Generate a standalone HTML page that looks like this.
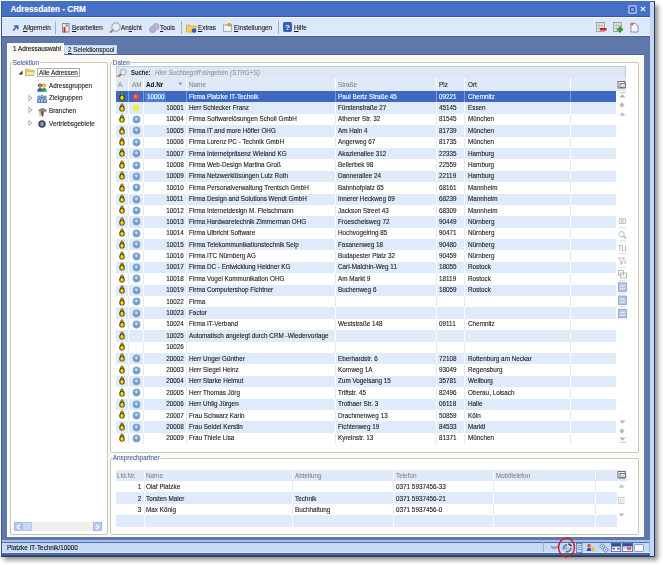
<!DOCTYPE html>
<html><head><meta charset="utf-8">
<style>
*{margin:0;padding:0;box-sizing:border-box}
html,body{width:663px;height:565px;overflow:hidden;background:#fff;font-family:"Liberation Sans",sans-serif;font-size:7.5px;color:#1a1a1a;-webkit-text-stroke:0.12px currentColor}
span{display:inline-block;white-space:nowrap;transform:scaleX(.845);transform-origin:0 0}
span.rt{transform-origin:100% 0}
.a{position:absolute}
.ic{position:absolute}
#shadow{position:absolute;left:4px;top:5px;width:654px;height:555px;background:#000;opacity:.45;filter:blur(2.6px)}
#win{position:absolute;left:1px;top:1px;width:653.8px;height:555.5px;background:#c4d6f4;border:1px solid #3b5898;border-right-color:#2c3a5c;border-bottom-color:#2c3a5c}
#rstrip{display:none}
#title{position:absolute;left:1.5px;top:1.3px;width:648.5px;height:15.7px;background:#4471c5;border-bottom:1px solid #35589e}
#title .tx{position:absolute;left:8.9px;top:3.3px;font-weight:bold;font-size:8.2px;letter-spacing:0;color:#fff;line-height:9px}
#toolbar{position:absolute;left:1.5px;top:16.8px;width:648.5px;height:19.2px;background:#dce9fa;border-top:1px solid #eef5ff;border-bottom:1px solid #eef5ff}
#tabarea{position:absolute;left:1.5px;top:36px;width:648.3px;height:504px;background:#5f77a9;border-top:1px solid #475f92}
.tb{position:absolute;top:5.9px;line-height:8px;color:#1a1a1a}
.sep{position:absolute;top:3px;width:1px;height:13.5px;background:#9fb0c8}
#page{position:absolute;left:5.4px;top:17.5px;width:637.6px;height:482.5px;background:#fbfaf5;border:1px solid #ffffff;box-shadow:0 -1px 0 #50679a}
.tab{position:absolute;line-height:8px}
.gb{position:absolute;border:1px solid #c9c5b8;border-radius:2px;background:#fff}
.gl{position:absolute;background:#fbfaf5;color:#4c66ad;padding:0 1px;line-height:8px}
.r{position:absolute;left:116px;width:500.4px;height:11.39px;background:#fff;line-height:11.39px;white-space:nowrap}
.r.alt{background:#dfeafb}
.r.sel{background:#3d69c2;color:#fff}
.r i{position:absolute;top:0;width:1px;height:100%;background:#dfeafb}
.r.alt i{background:#fff}
.r.sel i{background:#7b9be0}
.r .t{position:absolute;top:-0.4px}
.r .hl{position:absolute;left:28.6px;top:0.8px;width:21px;height:9.8px;background:#4b80da}
.r.c{width:501px}
.r.c .t{top:0.4px}
.hd{position:absolute;height:13.6px;background:#dfe9f8;line-height:8px;color:#8b8b8b}

.hd i{position:absolute;top:1px;width:1px;height:12px;background:#fff}
.hd span{position:absolute;top:3.6px}
.hd2 span{top:1.9px}
#status{position:absolute;left:1.5px;top:540px;width:648.3px;height:15.5px;background:linear-gradient(to bottom,#a9c1ec 0,#a9c1ec 1.6px,#5070b0 1.6px,#5070b0 3px,#c6d9f7 3px,#c6d9f7 12.2px,#dce8fb 12.2px,#dce8fb 13px,#4b69a9 13px,#4b69a9 14.8px,#3a4a70 14.8px)}
</style></head><body>
<div id="shadow"></div>
<div id="win"></div>
  <div id="rstrip"></div>
  <div id="title"><div class="tx">Adressdaten - CRM</div>
    <svg class="ic" style="left:626.4px;top:3.7px" width="9" height="9" viewBox="0 0 9 9"><rect x="0.4" y="0.4" width="8.2" height="8.2" rx="1.2" fill="#88a6e6" stroke="#b8ccf4" stroke-width="0.7"/><rect x="2.4" y="2.4" width="4.2" height="4.2" rx="0.6" fill="none" stroke="#2c4c98" stroke-width="1"/></svg>
    <svg class="ic" style="left:638.8px;top:4.8px" width="6" height="6" viewBox="0 0 6 6"><path d="M0.8 0.8 L5.2 5.2 M5.2 0.8 L0.8 5.2" stroke="#fff" stroke-width="1.15"/></svg>
  </div>
  <div id="toolbar">
    <svg class="ic" style="left:10.2px;top:7.0px" width="7" height="6" viewBox="0 0 7 6"><path d="M1 5.5 L5.5 1 M2 1 L5.8 1 L5.8 4.6" stroke="#3a66b8" stroke-width="1.5" fill="none"/></svg>
    <span class="tb" style="left:21.2px"><u>A</u>llgemein</span>
    <div class="sep" style="left:53.3px"></div>
    <svg class="ic" style="left:59.5px;top:4.9px" width="9" height="10" viewBox="0 0 9 10"><rect x="1.5" y="0.5" width="6.5" height="8.5" fill="#f4f4f4" stroke="#777" stroke-width="0.8"/><rect x="2.5" y="4" width="2" height="5.5" fill="#d03020"/><rect x="4.5" y="1.5" width="2.5" height="2" fill="#6a8fd0"/></svg>
    <span class="tb" style="left:70.2px"><u>B</u>earbeiten</span>
    <svg class="ic" style="left:107px;top:3.9px" width="13" height="11" viewBox="0 0 13 11"><circle cx="7" cy="5" r="4.2" fill="#e4eef8" stroke="#8896a8" stroke-width="1"/><path d="M4 8 L1 10.5" stroke="#b07a40" stroke-width="2"/></svg>
    <span class="tb" style="left:119.7px">An<u>s</u>icht</span>
    <svg class="ic" style="left:147px;top:5.4px" width="11" height="10" viewBox="0 0 11 10"><circle cx="7" cy="3.5" r="3" fill="#c0b8e0" stroke="#9a90c0" stroke-width="0.8"/><circle cx="3.6" cy="6.5" r="3" fill="#b8b0d8" stroke="#9a90c0" stroke-width="0.8"/></svg>
    <span class="tb" style="left:158.7px"><u>T</u>ools</span>
    <div class="sep" style="left:179.5px"></div>
    <svg class="ic" style="left:184.5px;top:4.9px" width="11" height="10" viewBox="0 0 11 10"><path d="M0.5 2 L4 2 L5 3 L10 3 L10 9 L0.5 9 Z" fill="#f5d060" stroke="#c8a030" stroke-width="0.7"/><circle cx="8" cy="7.5" r="2.3" fill="#2060c0"/></svg>
    <span class="tb" style="left:196.2px"><u>E</u>xtras</span>
    <svg class="ic" style="left:221px;top:4.4px" width="10" height="10" viewBox="0 0 10 10"><rect x="0.5" y="3" width="8" height="6.5" fill="#f0f4fa" stroke="#8090a8" stroke-width="0.7"/><path d="M3 3 L6 0.8 L9.5 2.5 L7 5 Z" fill="#e0a030"/></svg>
    <span class="tb" style="left:232.2px"><u>E</u>instellungen</span>
    <div class="sep" style="left:276px"></div>
    <svg class="ic" style="left:281.5px;top:4.4px" width="9" height="10" viewBox="0 0 9 10"><rect x="0.5" y="0.5" width="8" height="9" rx="1" fill="#2f62c0" stroke="#1c3f8a" stroke-width="0.7"/><text x="4.5" y="8" font-size="7.5" font-weight="bold" fill="#fff" text-anchor="middle" font-family="Liberation Sans">?</text></svg>
    <span class="tb" style="left:292.2px"><u>H</u>ilfe</span>
    <svg class="ic" style="left:594.5px;top:4.4px" width="11" height="11" viewBox="0 0 11 11"><rect x="0.5" y="0.5" width="8" height="9" fill="#e8e8e8" stroke="#888" stroke-width="0.7"/><path d="M0.5 3.5 H8.5 M0.5 6.5 H8.5 M3.2 0.5 V9.5 M5.8 0.5 V9.5" stroke="#999" stroke-width="0.5"/><rect x="4" y="6" width="6.5" height="2.5" fill="#d02020"/></svg>
    <svg class="ic" style="left:611px;top:4.4px" width="11" height="11" viewBox="0 0 11 11"><rect x="0.5" y="0.5" width="8" height="9" fill="#e8e8e8" stroke="#888" stroke-width="0.7"/><path d="M0.5 3.5 H8.5 M0.5 6.5 H8.5 M3.2 0.5 V9.5 M5.8 0.5 V9.5" stroke="#999" stroke-width="0.5"/><path d="M7 4.5 V10.5 M4 7.5 H10" stroke="#20a020" stroke-width="2"/></svg>
    <svg class="ic" style="left:628.5px;top:3.9px" width="9" height="11" viewBox="0 0 9 11"><path d="M1 1.5 H5.5 L8 4 V10 H1 Z" fill="#f4f6fa" stroke="#607090" stroke-width="0.7"/><circle cx="2" cy="2" r="1.5" fill="#f07020"/></svg>
  </div>
  <div id="tabarea">
    <!-- tabs -->
    <div class="a" style="left:62.2px;top:8px;width:53.5px;height:10.5px;background:#d8e6f8;border:1px solid #c3d4ee;border-bottom:none"></div>
    <span class="tab" style="left:66px;top:8.6px;color:#222"><u>2</u> Selektionspool</span>
    <div id="page"></div>
    <div class="a" style="left:5.4px;top:5.5px;width:57.1px;height:13.5px;background:#fbfaf5;border:1px solid #fff;border-bottom:none"></div>
    <span class="tab" style="left:11px;top:7.8px;color:#111">1 Adressauswahl</span>
  </div>

  <!-- Selektion groupbox -->
  <div class="gb" style="left:9.8px;top:62px;width:98.4px;height:472.8px"></div>
  <span class="gl" style="left:12px;top:59px">Selektion</span>
  <!-- tree -->
  <svg class="ic" style="left:17.5px;top:70px" width="5" height="5" viewBox="0 0 5 5"><path d="M4.5 0.5 L4.5 4.5 L0.5 4.5 Z" fill="#333"/></svg>
  <svg class="ic" style="left:24.5px;top:68px" width="10" height="8" viewBox="0 0 10 8"><path d="M0.5 1 L3.5 1 L4.5 2 L8.5 2 L8.5 7.5 L0.5 7.5 Z" fill="#f2d58a" stroke="#b89a50" stroke-width="0.6"/><path d="M1.5 3.5 L9.8 3.5 L8.5 7.5 L0.5 7.5 Z" fill="#fbe6a8" stroke="#c0a058" stroke-width="0.6"/></svg>
  <div class="a" style="left:36.6px;top:68.2px;width:43.4px;height:9.2px;border:1px solid #aaaaaa;background:#fff"></div>
  <span class="a" style="left:38.6px;top:69.3px;line-height:8px;">Alle Adressen</span>
  <svg class="ic" style="left:36.5px;top:82.5px" width="10" height="9" viewBox="0 0 10 9"><circle cx="3" cy="2.6" r="2.1" fill="#6a3a20"/><circle cx="3" cy="2.9" r="1.3" fill="#d8905a"/><path d="M0.2 8.8 Q0.3 5 3 5 Q5.7 5 5.8 8.8 Z" fill="#2f5cc0"/><circle cx="7" cy="2.6" r="2.1" fill="#e09030"/><circle cx="7" cy="2.9" r="1.3" fill="#f4c080"/><path d="M4.2 8.8 Q4.3 5 7 5 Q9.7 5 9.8 8.8 Z" fill="#30a040"/></svg>
  <span class="a" style="left:49px;top:81.5px;line-height:8px">Adressgruppen</span>
  <svg class="ic" style="left:27.5px;top:94.5px" width="5" height="6" viewBox="0 0 5 6"><path d="M0.8 0.5 L4.2 3 L0.8 5.5 Z" fill="none" stroke="#8a8a8a" stroke-width="0.7"/></svg>
  <svg class="ic" style="left:36.5px;top:95px" width="10" height="8" viewBox="0 0 10 8"><g fill="#a8c0e8" stroke="#2a4890" stroke-width="0.6"><circle cx="2" cy="2.2" r="1.3"/><path d="M0.4 7.7 V5 Q0.4 3.7 2 3.7 Q3.6 3.7 3.6 5 V7.7 Z"/><circle cx="8" cy="2.2" r="1.3"/><path d="M6.4 7.7 V5 Q6.4 3.7 8 3.7 Q9.6 3.7 9.6 5 V7.7 Z"/><circle cx="5" cy="1.5" r="1.3"/><path d="M3.4 7.7 V4.3 Q3.4 3 5 3 Q6.6 3 6.6 4.3 V7.7 Z"/></g></svg>
  <span class="a" style="left:49px;top:94.2px;line-height:8px">Zielgruppen</span>
  <svg class="ic" style="left:27.5px;top:107px" width="5" height="6" viewBox="0 0 5 6"><path d="M0.8 0.5 L4.2 3 L0.8 5.5 Z" fill="none" stroke="#8a8a8a" stroke-width="0.7"/></svg>
  <svg class="ic" style="left:37.5px;top:107.5px" width="9" height="9" viewBox="0 0 9 9"><path d="M0.5 2.5 Q2 0.3 5 0.5 Q8 0.8 8.5 3.2 L6.2 3.6 L3 3.2 Z" fill="#8a8a8a" stroke="#505050" stroke-width="0.4"/><path d="M3 3.3 L5.8 3.6 L5.2 8.6 H3.8 Z" fill="#7a3820"/><path d="M1.3 3 L2.8 3.3 L2.6 8 H1.6 Z" fill="#9a9a9a"/></svg>
  <span class="a" style="left:49px;top:107px;line-height:8px">Branchen</span>
  <svg class="ic" style="left:27.5px;top:119.5px" width="5" height="6" viewBox="0 0 5 6"><path d="M0.8 0.5 L4.2 3 L0.8 5.5 Z" fill="none" stroke="#8a8a8a" stroke-width="0.7"/></svg>
  <svg class="ic" style="left:37.8px;top:120px" width="8" height="8" viewBox="0 0 8 8"><circle cx="4" cy="4" r="3.7" fill="#2c4a80"/><ellipse cx="4" cy="3.9" rx="1.6" ry="2.2" fill="#c89870"/></svg>
  <span class="a" style="left:49px;top:119.5px;line-height:8px">Vertriebsgebiete</span>
  <!-- scrollbar -->
  <div class="a" style="left:13.8px;top:522.3px;width:88px;height:8.5px;background:#f1f0ea"></div>
  <div class="a" style="left:13.8px;top:522.3px;width:8.5px;height:8.5px;background:#b9cdf0;border:1px solid #9fb6e0;border-radius:1px"></div>
  <svg class="ic" style="left:15.8px;top:523.8px" width="5" height="6" viewBox="0 0 5 6"><path d="M3.8 0.6 L1.2 3 L3.8 5.4" fill="none" stroke="#fff" stroke-width="1.1"/></svg>
  <div class="a" style="left:22.3px;top:522.3px;width:9.5px;height:8.5px;background:#c8d8f4;border:1px solid #b0c4ea;border-radius:1px"></div>
  <div class="a" style="left:93.3px;top:522.3px;width:8.5px;height:8.5px;background:#b9cdf0;border:1px solid #9fb6e0;border-radius:1px"></div>
  <svg class="ic" style="left:95.3px;top:523.8px" width="5" height="6" viewBox="0 0 5 6"><path d="M1.2 0.6 L3.8 3 L1.2 5.4" fill="none" stroke="#fff" stroke-width="1.1"/></svg>

  <!-- Daten groupbox -->
  <div class="gb" style="left:109.8px;top:62px;width:529.6px;height:391px"></div>
  <span class="gl" style="left:112.2px;top:58.5px">Daten</span>
  <div class="a" style="left:116px;top:66.4px;width:510px;height:11.3px;background:#dfe6f4;border:1px solid #bccbe3"></div>
  <svg class="ic" style="left:116.5px;top:67.5px" width="10" height="10" viewBox="0 0 10 10"><circle cx="6" cy="4" r="3" fill="#e6f4fc" stroke="#8a9aa8" stroke-width="0.8"/><circle cx="5.5" cy="3.4" r="1.2" fill="#b8dcf4"/><path d="M3.6 6.4 L1.2 8.8" stroke="#b87848" stroke-width="2.1" stroke-linecap="round"/></svg>
  <span class="a" style="left:130.5px;top:67.8px;line-height:9px;color:#222;font-weight:bold;-webkit-text-stroke:0;transform:scaleX(.78)">Suche:</span>
  <span class="a" style="left:155px;top:67.8px;line-height:9px;color:#8f8f8f;font-style:italic;-webkit-text-stroke:0.05px currentColor">Hier Suchbegriff eingeben (STRG+S)</span>
  <!-- header -->
  <div class="hd" style="left:116px;top:77.4px;width:510px">
    <i style="left:12.0px"></i><i style="left:27.0px"></i><i style="left:70.0px"></i><i style="left:219.0px"></i><i style="left:319.7px"></i><i style="left:348.4px"></i><i style="left:454.2px"></i>
    <span style="left:2.0px">A</span><span style="left:16.4px">AM</span><span style="left:30.0px;color:#111;font-weight:bold;-webkit-text-stroke:0">Ad.Nr</span><span style="left:73.0px">Name</span><span style="left:222.0px">Straße</span><span style="left:322.7px;color:#222">Plz</span><span style="left:351.7px;color:#222">Ort</span>
  </div>
  <svg class="ic" style="left:178px;top:82px" width="5" height="4" viewBox="0 0 5 4"><path d="M0.3 0.5 H4.7 L2.5 3.6 Z" fill="#9a9a9a"/></svg>
  <svg class="ic" style="left:616.5px;top:80px" width="10" height="10" viewBox="0 0 10 10"><rect x="1" y="1.5" width="7" height="6.5" fill="#f4f4f4" stroke="#555" stroke-width="0.8"/><rect x="3" y="3.5" width="5.5" height="4" fill="#ddd" stroke="#555" stroke-width="0.7"/></svg>
  <div class="r sel" style="top:91.00px">
<i style="left:12.0px"></i>
<i style="left:27.0px"></i>
<i style="left:70.0px"></i>
<i style="left:219.0px"></i>
<i style="left:319.7px"></i>
<i style="left:348.4px"></i>
<i style="left:454.2px"></i>
<b class="hl"></b>
<span class="t" style="left:30.6px">10000</span>
<span class="t" style="left:73px">Firma Platzke IT-Technik</span>
<span class="t" style="left:222px">Paul Bertz Straße 45</span>
<span class="t" style="left:322.7px">09221</span>
<span class="t" style="left:351.7px">Chemnitz</span>
</div>
<svg class="ic" style="left:118.6px;top:91.50px" width="6" height="9" viewBox="0 0 6 9"><path d="M3 0.4 C4.3 0.4 4.6 1.6 4.5 2.8 C5.6 3.6 5.9 5.4 5.6 6.8 C5.4 8 4.6 8.6 3 8.6 C1.4 8.6 0.6 8 0.4 6.8 C0.1 5.4 0.4 3.6 1.5 2.8 C1.4 1.6 1.7 0.4 3 0.4 Z" fill="#403600"/><path d="M3 3.4 C4.2 3.6 4.8 4.8 4.7 6.2 C4.6 7.4 4 7.8 3 7.8 C2 7.8 1.4 7.4 1.3 6.2 C1.2 4.8 1.8 3.6 3 3.4 Z" fill="#f0d418"/><circle cx="3" cy="1.9" r="0.8" fill="#c8c840"/></svg>
<svg class="ic" style="left:131.8px;top:92.6px" width="8" height="8" viewBox="0 0 8 8"><circle cx="4" cy="4" r="3.2" fill="#e0463a"/><circle cx="3.4" cy="3.2" r="1.2" fill="#f58a70"/></svg>
<div class="r alt" style="top:102.39px">
<i style="left:12.0px"></i>
<i style="left:27.0px"></i>
<i style="left:70.0px"></i>
<i style="left:219.0px"></i>
<i style="left:319.7px"></i>
<i style="left:348.4px"></i>
<i style="left:454.2px"></i>
<span class="t rt" style="right:432.7px">10001</span>
<span class="t" style="left:73px">Herr Schlecker Franz</span>
<span class="t" style="left:222px">Fürstenstraße 27</span>
<span class="t" style="left:322.7px">45145</span>
<span class="t" style="left:351.7px">Essen</span>
</div>
<svg class="ic" style="left:118.6px;top:102.89px" width="6" height="9" viewBox="0 0 6 9"><path d="M3 0.4 C4.3 0.4 4.6 1.6 4.5 2.8 C5.6 3.6 5.9 5.4 5.6 6.8 C5.4 8 4.6 8.6 3 8.6 C1.4 8.6 0.6 8 0.4 6.8 C0.1 5.4 0.4 3.6 1.5 2.8 C1.4 1.6 1.7 0.4 3 0.4 Z" fill="#403600"/><path d="M3 3.4 C4.2 3.6 4.8 4.8 4.7 6.2 C4.6 7.4 4 7.8 3 7.8 C2 7.8 1.4 7.4 1.3 6.2 C1.2 4.8 1.8 3.6 3 3.4 Z" fill="#f0d418"/><circle cx="3" cy="1.9" r="0.8" fill="#c8c840"/></svg>
<svg class="ic" style="left:131.8px;top:103.99px" width="8" height="8" viewBox="0 0 8 8"><circle cx="4" cy="4" r="3.1" fill="#f6e640"/><circle cx="3.6" cy="3.6" r="1.8" fill="#fff048"/></svg>
<div class="r" style="top:113.78px">
<i style="left:12.0px"></i>
<i style="left:27.0px"></i>
<i style="left:70.0px"></i>
<i style="left:219.0px"></i>
<i style="left:319.7px"></i>
<i style="left:348.4px"></i>
<i style="left:454.2px"></i>
<span class="t rt" style="right:432.7px">10004</span>
<span class="t" style="left:73px">Firma Softwarelösungen Scholl GmbH</span>
<span class="t" style="left:222px">Athener Str. 32</span>
<span class="t" style="left:322.7px">81545</span>
<span class="t" style="left:351.7px">München</span>
</div>
<svg class="ic" style="left:118.6px;top:114.28px" width="6" height="9" viewBox="0 0 6 9"><path d="M3 0.4 C4.3 0.4 4.6 1.6 4.5 2.8 C5.6 3.6 5.9 5.4 5.6 6.8 C5.4 8 4.6 8.6 3 8.6 C1.4 8.6 0.6 8 0.4 6.8 C0.1 5.4 0.4 3.6 1.5 2.8 C1.4 1.6 1.7 0.4 3 0.4 Z" fill="#403600"/><path d="M3 3.4 C4.2 3.6 4.8 4.8 4.7 6.2 C4.6 7.4 4 7.8 3 7.8 C2 7.8 1.4 7.4 1.3 6.2 C1.2 4.8 1.8 3.6 3 3.4 Z" fill="#f0d418"/><circle cx="3" cy="1.9" r="0.8" fill="#c8c840"/></svg>
<svg class="ic" style="left:131.6px;top:114.98px" width="9" height="9" viewBox="0 0 9 9"><circle cx="4.5" cy="4.5" r="3.9" fill="#a2b0c2"/><circle cx="4.5" cy="4.5" r="3.2" fill="#6a9ad4"/><circle cx="4" cy="3.8" r="1.6" fill="#a0c4ea"/><path d="M3.4 3.2 Q4.6 2.4 5.4 3.3 Q5.2 4.4 4.4 5.4" stroke="#f0f8ff" stroke-width="0.8" fill="none"/></svg>
<div class="r alt" style="top:125.17px">
<i style="left:12.0px"></i>
<i style="left:27.0px"></i>
<i style="left:70.0px"></i>
<i style="left:219.0px"></i>
<i style="left:319.7px"></i>
<i style="left:348.4px"></i>
<i style="left:454.2px"></i>
<span class="t rt" style="right:432.7px">10005</span>
<span class="t" style="left:73px">Firma IT and more Höfler OHG</span>
<span class="t" style="left:222px">Am Hain 4</span>
<span class="t" style="left:322.7px">81739</span>
<span class="t" style="left:351.7px">München</span>
</div>
<svg class="ic" style="left:118.6px;top:125.67px" width="6" height="9" viewBox="0 0 6 9"><path d="M3 0.4 C4.3 0.4 4.6 1.6 4.5 2.8 C5.6 3.6 5.9 5.4 5.6 6.8 C5.4 8 4.6 8.6 3 8.6 C1.4 8.6 0.6 8 0.4 6.8 C0.1 5.4 0.4 3.6 1.5 2.8 C1.4 1.6 1.7 0.4 3 0.4 Z" fill="#403600"/><path d="M3 3.4 C4.2 3.6 4.8 4.8 4.7 6.2 C4.6 7.4 4 7.8 3 7.8 C2 7.8 1.4 7.4 1.3 6.2 C1.2 4.8 1.8 3.6 3 3.4 Z" fill="#f0d418"/><circle cx="3" cy="1.9" r="0.8" fill="#c8c840"/></svg>
<svg class="ic" style="left:131.6px;top:126.37px" width="9" height="9" viewBox="0 0 9 9"><circle cx="4.5" cy="4.5" r="3.9" fill="#a2b0c2"/><circle cx="4.5" cy="4.5" r="3.2" fill="#6a9ad4"/><circle cx="4" cy="3.8" r="1.6" fill="#a0c4ea"/><path d="M3.4 3.2 Q4.6 2.4 5.4 3.3 Q5.2 4.4 4.4 5.4" stroke="#f0f8ff" stroke-width="0.8" fill="none"/></svg>
<div class="r" style="top:136.56px">
<i style="left:12.0px"></i>
<i style="left:27.0px"></i>
<i style="left:70.0px"></i>
<i style="left:219.0px"></i>
<i style="left:319.7px"></i>
<i style="left:348.4px"></i>
<i style="left:454.2px"></i>
<span class="t rt" style="right:432.7px">10006</span>
<span class="t" style="left:73px">Firma Lorenz PC - Technik GmbH</span>
<span class="t" style="left:222px">Angerweg 67</span>
<span class="t" style="left:322.7px">81735</span>
<span class="t" style="left:351.7px">München</span>
</div>
<svg class="ic" style="left:118.6px;top:137.06px" width="6" height="9" viewBox="0 0 6 9"><path d="M3 0.4 C4.3 0.4 4.6 1.6 4.5 2.8 C5.6 3.6 5.9 5.4 5.6 6.8 C5.4 8 4.6 8.6 3 8.6 C1.4 8.6 0.6 8 0.4 6.8 C0.1 5.4 0.4 3.6 1.5 2.8 C1.4 1.6 1.7 0.4 3 0.4 Z" fill="#403600"/><path d="M3 3.4 C4.2 3.6 4.8 4.8 4.7 6.2 C4.6 7.4 4 7.8 3 7.8 C2 7.8 1.4 7.4 1.3 6.2 C1.2 4.8 1.8 3.6 3 3.4 Z" fill="#f0d418"/><circle cx="3" cy="1.9" r="0.8" fill="#c8c840"/></svg>
<svg class="ic" style="left:131.6px;top:137.76px" width="9" height="9" viewBox="0 0 9 9"><circle cx="4.5" cy="4.5" r="3.9" fill="#a2b0c2"/><circle cx="4.5" cy="4.5" r="3.2" fill="#6a9ad4"/><circle cx="4" cy="3.8" r="1.6" fill="#a0c4ea"/><path d="M3.4 3.2 Q4.6 2.4 5.4 3.3 Q5.2 4.4 4.4 5.4" stroke="#f0f8ff" stroke-width="0.8" fill="none"/></svg>
<div class="r alt" style="top:147.95px">
<i style="left:12.0px"></i>
<i style="left:27.0px"></i>
<i style="left:70.0px"></i>
<i style="left:219.0px"></i>
<i style="left:319.7px"></i>
<i style="left:348.4px"></i>
<i style="left:454.2px"></i>
<span class="t rt" style="right:432.7px">10007</span>
<span class="t" style="left:73px">Firma Internetpräsenz Wieland KG</span>
<span class="t" style="left:222px">Akazienallee 312</span>
<span class="t" style="left:322.7px">22335</span>
<span class="t" style="left:351.7px">Hamburg</span>
</div>
<svg class="ic" style="left:118.6px;top:148.45px" width="6" height="9" viewBox="0 0 6 9"><path d="M3 0.4 C4.3 0.4 4.6 1.6 4.5 2.8 C5.6 3.6 5.9 5.4 5.6 6.8 C5.4 8 4.6 8.6 3 8.6 C1.4 8.6 0.6 8 0.4 6.8 C0.1 5.4 0.4 3.6 1.5 2.8 C1.4 1.6 1.7 0.4 3 0.4 Z" fill="#403600"/><path d="M3 3.4 C4.2 3.6 4.8 4.8 4.7 6.2 C4.6 7.4 4 7.8 3 7.8 C2 7.8 1.4 7.4 1.3 6.2 C1.2 4.8 1.8 3.6 3 3.4 Z" fill="#f0d418"/><circle cx="3" cy="1.9" r="0.8" fill="#c8c840"/></svg>
<svg class="ic" style="left:131.6px;top:149.15px" width="9" height="9" viewBox="0 0 9 9"><circle cx="4.5" cy="4.5" r="3.9" fill="#a2b0c2"/><circle cx="4.5" cy="4.5" r="3.2" fill="#6a9ad4"/><circle cx="4" cy="3.8" r="1.6" fill="#a0c4ea"/><path d="M3.4 3.2 Q4.6 2.4 5.4 3.3 Q5.2 4.4 4.4 5.4" stroke="#f0f8ff" stroke-width="0.8" fill="none"/></svg>
<div class="r" style="top:159.34px">
<i style="left:12.0px"></i>
<i style="left:27.0px"></i>
<i style="left:70.0px"></i>
<i style="left:219.0px"></i>
<i style="left:319.7px"></i>
<i style="left:348.4px"></i>
<i style="left:454.2px"></i>
<span class="t rt" style="right:432.7px">10008</span>
<span class="t" style="left:73px">Firma Web-Design Martina Groß</span>
<span class="t" style="left:222px">Bellerbek 98</span>
<span class="t" style="left:322.7px">22559</span>
<span class="t" style="left:351.7px">Hamburg</span>
</div>
<svg class="ic" style="left:118.6px;top:159.84px" width="6" height="9" viewBox="0 0 6 9"><path d="M3 0.4 C4.3 0.4 4.6 1.6 4.5 2.8 C5.6 3.6 5.9 5.4 5.6 6.8 C5.4 8 4.6 8.6 3 8.6 C1.4 8.6 0.6 8 0.4 6.8 C0.1 5.4 0.4 3.6 1.5 2.8 C1.4 1.6 1.7 0.4 3 0.4 Z" fill="#403600"/><path d="M3 3.4 C4.2 3.6 4.8 4.8 4.7 6.2 C4.6 7.4 4 7.8 3 7.8 C2 7.8 1.4 7.4 1.3 6.2 C1.2 4.8 1.8 3.6 3 3.4 Z" fill="#f0d418"/><circle cx="3" cy="1.9" r="0.8" fill="#c8c840"/></svg>
<svg class="ic" style="left:131.6px;top:160.54px" width="9" height="9" viewBox="0 0 9 9"><circle cx="4.5" cy="4.5" r="3.9" fill="#a2b0c2"/><circle cx="4.5" cy="4.5" r="3.2" fill="#6a9ad4"/><circle cx="4" cy="3.8" r="1.6" fill="#a0c4ea"/><path d="M3.4 3.2 Q4.6 2.4 5.4 3.3 Q5.2 4.4 4.4 5.4" stroke="#f0f8ff" stroke-width="0.8" fill="none"/></svg>
<div class="r alt" style="top:170.73px">
<i style="left:12.0px"></i>
<i style="left:27.0px"></i>
<i style="left:70.0px"></i>
<i style="left:219.0px"></i>
<i style="left:319.7px"></i>
<i style="left:348.4px"></i>
<i style="left:454.2px"></i>
<span class="t rt" style="right:432.7px">10009</span>
<span class="t" style="left:73px">Firma Netzwerklösungen Lutz Roth</span>
<span class="t" style="left:222px">Dannerallee 24</span>
<span class="t" style="left:322.7px">22119</span>
<span class="t" style="left:351.7px">Hamburg</span>
</div>
<svg class="ic" style="left:118.6px;top:171.23px" width="6" height="9" viewBox="0 0 6 9"><path d="M3 0.4 C4.3 0.4 4.6 1.6 4.5 2.8 C5.6 3.6 5.9 5.4 5.6 6.8 C5.4 8 4.6 8.6 3 8.6 C1.4 8.6 0.6 8 0.4 6.8 C0.1 5.4 0.4 3.6 1.5 2.8 C1.4 1.6 1.7 0.4 3 0.4 Z" fill="#403600"/><path d="M3 3.4 C4.2 3.6 4.8 4.8 4.7 6.2 C4.6 7.4 4 7.8 3 7.8 C2 7.8 1.4 7.4 1.3 6.2 C1.2 4.8 1.8 3.6 3 3.4 Z" fill="#f0d418"/><circle cx="3" cy="1.9" r="0.8" fill="#c8c840"/></svg>
<svg class="ic" style="left:131.6px;top:171.93px" width="9" height="9" viewBox="0 0 9 9"><circle cx="4.5" cy="4.5" r="3.9" fill="#a2b0c2"/><circle cx="4.5" cy="4.5" r="3.2" fill="#6a9ad4"/><circle cx="4" cy="3.8" r="1.6" fill="#a0c4ea"/><path d="M3.4 3.2 Q4.6 2.4 5.4 3.3 Q5.2 4.4 4.4 5.4" stroke="#f0f8ff" stroke-width="0.8" fill="none"/></svg>
<div class="r" style="top:182.12px">
<i style="left:12.0px"></i>
<i style="left:27.0px"></i>
<i style="left:70.0px"></i>
<i style="left:219.0px"></i>
<i style="left:319.7px"></i>
<i style="left:348.4px"></i>
<i style="left:454.2px"></i>
<span class="t rt" style="right:432.7px">10010</span>
<span class="t" style="left:73px">Firma Personalverwaltung Trentsch GmbH</span>
<span class="t" style="left:222px">Bahnhofplatz 65</span>
<span class="t" style="left:322.7px">68161</span>
<span class="t" style="left:351.7px">Mannheim</span>
</div>
<svg class="ic" style="left:118.6px;top:182.62px" width="6" height="9" viewBox="0 0 6 9"><path d="M3 0.4 C4.3 0.4 4.6 1.6 4.5 2.8 C5.6 3.6 5.9 5.4 5.6 6.8 C5.4 8 4.6 8.6 3 8.6 C1.4 8.6 0.6 8 0.4 6.8 C0.1 5.4 0.4 3.6 1.5 2.8 C1.4 1.6 1.7 0.4 3 0.4 Z" fill="#403600"/><path d="M3 3.4 C4.2 3.6 4.8 4.8 4.7 6.2 C4.6 7.4 4 7.8 3 7.8 C2 7.8 1.4 7.4 1.3 6.2 C1.2 4.8 1.8 3.6 3 3.4 Z" fill="#f0d418"/><circle cx="3" cy="1.9" r="0.8" fill="#c8c840"/></svg>
<svg class="ic" style="left:131.6px;top:183.32px" width="9" height="9" viewBox="0 0 9 9"><circle cx="4.5" cy="4.5" r="3.9" fill="#a2b0c2"/><circle cx="4.5" cy="4.5" r="3.2" fill="#6a9ad4"/><circle cx="4" cy="3.8" r="1.6" fill="#a0c4ea"/><path d="M3.4 3.2 Q4.6 2.4 5.4 3.3 Q5.2 4.4 4.4 5.4" stroke="#f0f8ff" stroke-width="0.8" fill="none"/></svg>
<div class="r alt" style="top:193.51px">
<i style="left:12.0px"></i>
<i style="left:27.0px"></i>
<i style="left:70.0px"></i>
<i style="left:219.0px"></i>
<i style="left:319.7px"></i>
<i style="left:348.4px"></i>
<i style="left:454.2px"></i>
<span class="t rt" style="right:432.7px">10011</span>
<span class="t" style="left:73px">Firma Design and Solutions Wendt GmbH</span>
<span class="t" style="left:222px">Innerer Heckweg 69</span>
<span class="t" style="left:322.7px">68239</span>
<span class="t" style="left:351.7px">Mannheim</span>
</div>
<svg class="ic" style="left:118.6px;top:194.01px" width="6" height="9" viewBox="0 0 6 9"><path d="M3 0.4 C4.3 0.4 4.6 1.6 4.5 2.8 C5.6 3.6 5.9 5.4 5.6 6.8 C5.4 8 4.6 8.6 3 8.6 C1.4 8.6 0.6 8 0.4 6.8 C0.1 5.4 0.4 3.6 1.5 2.8 C1.4 1.6 1.7 0.4 3 0.4 Z" fill="#403600"/><path d="M3 3.4 C4.2 3.6 4.8 4.8 4.7 6.2 C4.6 7.4 4 7.8 3 7.8 C2 7.8 1.4 7.4 1.3 6.2 C1.2 4.8 1.8 3.6 3 3.4 Z" fill="#f0d418"/><circle cx="3" cy="1.9" r="0.8" fill="#c8c840"/></svg>
<svg class="ic" style="left:131.6px;top:194.71px" width="9" height="9" viewBox="0 0 9 9"><circle cx="4.5" cy="4.5" r="3.9" fill="#a2b0c2"/><circle cx="4.5" cy="4.5" r="3.2" fill="#6a9ad4"/><circle cx="4" cy="3.8" r="1.6" fill="#a0c4ea"/><path d="M3.4 3.2 Q4.6 2.4 5.4 3.3 Q5.2 4.4 4.4 5.4" stroke="#f0f8ff" stroke-width="0.8" fill="none"/></svg>
<div class="r" style="top:204.90px">
<i style="left:12.0px"></i>
<i style="left:27.0px"></i>
<i style="left:70.0px"></i>
<i style="left:219.0px"></i>
<i style="left:319.7px"></i>
<i style="left:348.4px"></i>
<i style="left:454.2px"></i>
<span class="t rt" style="right:432.7px">10012</span>
<span class="t" style="left:73px">Firma Internetdesign M. Fleischmann</span>
<span class="t" style="left:222px">Jackson Street 43</span>
<span class="t" style="left:322.7px">68309</span>
<span class="t" style="left:351.7px">Mannheim</span>
</div>
<svg class="ic" style="left:118.6px;top:205.40px" width="6" height="9" viewBox="0 0 6 9"><path d="M3 0.4 C4.3 0.4 4.6 1.6 4.5 2.8 C5.6 3.6 5.9 5.4 5.6 6.8 C5.4 8 4.6 8.6 3 8.6 C1.4 8.6 0.6 8 0.4 6.8 C0.1 5.4 0.4 3.6 1.5 2.8 C1.4 1.6 1.7 0.4 3 0.4 Z" fill="#403600"/><path d="M3 3.4 C4.2 3.6 4.8 4.8 4.7 6.2 C4.6 7.4 4 7.8 3 7.8 C2 7.8 1.4 7.4 1.3 6.2 C1.2 4.8 1.8 3.6 3 3.4 Z" fill="#f0d418"/><circle cx="3" cy="1.9" r="0.8" fill="#c8c840"/></svg>
<svg class="ic" style="left:131.6px;top:206.10px" width="9" height="9" viewBox="0 0 9 9"><circle cx="4.5" cy="4.5" r="3.9" fill="#a2b0c2"/><circle cx="4.5" cy="4.5" r="3.2" fill="#6a9ad4"/><circle cx="4" cy="3.8" r="1.6" fill="#a0c4ea"/><path d="M3.4 3.2 Q4.6 2.4 5.4 3.3 Q5.2 4.4 4.4 5.4" stroke="#f0f8ff" stroke-width="0.8" fill="none"/></svg>
<div class="r alt" style="top:216.29px">
<i style="left:12.0px"></i>
<i style="left:27.0px"></i>
<i style="left:70.0px"></i>
<i style="left:219.0px"></i>
<i style="left:319.7px"></i>
<i style="left:348.4px"></i>
<i style="left:454.2px"></i>
<span class="t rt" style="right:432.7px">10013</span>
<span class="t" style="left:73px">Firma Hardwaretechnik Zimmerman OHG</span>
<span class="t" style="left:222px">Froescheisweg 72</span>
<span class="t" style="left:322.7px">90449</span>
<span class="t" style="left:351.7px">Nürnberg</span>
</div>
<svg class="ic" style="left:118.6px;top:216.79px" width="6" height="9" viewBox="0 0 6 9"><path d="M3 0.4 C4.3 0.4 4.6 1.6 4.5 2.8 C5.6 3.6 5.9 5.4 5.6 6.8 C5.4 8 4.6 8.6 3 8.6 C1.4 8.6 0.6 8 0.4 6.8 C0.1 5.4 0.4 3.6 1.5 2.8 C1.4 1.6 1.7 0.4 3 0.4 Z" fill="#403600"/><path d="M3 3.4 C4.2 3.6 4.8 4.8 4.7 6.2 C4.6 7.4 4 7.8 3 7.8 C2 7.8 1.4 7.4 1.3 6.2 C1.2 4.8 1.8 3.6 3 3.4 Z" fill="#f0d418"/><circle cx="3" cy="1.9" r="0.8" fill="#c8c840"/></svg>
<svg class="ic" style="left:131.6px;top:217.49px" width="9" height="9" viewBox="0 0 9 9"><circle cx="4.5" cy="4.5" r="3.9" fill="#a2b0c2"/><circle cx="4.5" cy="4.5" r="3.2" fill="#6a9ad4"/><circle cx="4" cy="3.8" r="1.6" fill="#a0c4ea"/><path d="M3.4 3.2 Q4.6 2.4 5.4 3.3 Q5.2 4.4 4.4 5.4" stroke="#f0f8ff" stroke-width="0.8" fill="none"/></svg>
<div class="r" style="top:227.68px">
<i style="left:12.0px"></i>
<i style="left:27.0px"></i>
<i style="left:70.0px"></i>
<i style="left:219.0px"></i>
<i style="left:319.7px"></i>
<i style="left:348.4px"></i>
<i style="left:454.2px"></i>
<span class="t rt" style="right:432.7px">10014</span>
<span class="t" style="left:73px">Firma Ulbricht Software</span>
<span class="t" style="left:222px">Hochvogelring 85</span>
<span class="t" style="left:322.7px">90471</span>
<span class="t" style="left:351.7px">Nürnberg</span>
</div>
<svg class="ic" style="left:118.6px;top:228.18px" width="6" height="9" viewBox="0 0 6 9"><path d="M3 0.4 C4.3 0.4 4.6 1.6 4.5 2.8 C5.6 3.6 5.9 5.4 5.6 6.8 C5.4 8 4.6 8.6 3 8.6 C1.4 8.6 0.6 8 0.4 6.8 C0.1 5.4 0.4 3.6 1.5 2.8 C1.4 1.6 1.7 0.4 3 0.4 Z" fill="#403600"/><path d="M3 3.4 C4.2 3.6 4.8 4.8 4.7 6.2 C4.6 7.4 4 7.8 3 7.8 C2 7.8 1.4 7.4 1.3 6.2 C1.2 4.8 1.8 3.6 3 3.4 Z" fill="#f0d418"/><circle cx="3" cy="1.9" r="0.8" fill="#c8c840"/></svg>
<svg class="ic" style="left:131.6px;top:228.88px" width="9" height="9" viewBox="0 0 9 9"><circle cx="4.5" cy="4.5" r="3.9" fill="#a2b0c2"/><circle cx="4.5" cy="4.5" r="3.2" fill="#6a9ad4"/><circle cx="4" cy="3.8" r="1.6" fill="#a0c4ea"/><path d="M3.4 3.2 Q4.6 2.4 5.4 3.3 Q5.2 4.4 4.4 5.4" stroke="#f0f8ff" stroke-width="0.8" fill="none"/></svg>
<div class="r alt" style="top:239.07px">
<i style="left:12.0px"></i>
<i style="left:27.0px"></i>
<i style="left:70.0px"></i>
<i style="left:219.0px"></i>
<i style="left:319.7px"></i>
<i style="left:348.4px"></i>
<i style="left:454.2px"></i>
<span class="t rt" style="right:432.7px">10015</span>
<span class="t" style="left:73px">Firma Telekommunikationstechnik Seip</span>
<span class="t" style="left:222px">Fasanenweg 18</span>
<span class="t" style="left:322.7px">90480</span>
<span class="t" style="left:351.7px">Nürnberg</span>
</div>
<svg class="ic" style="left:118.6px;top:239.57px" width="6" height="9" viewBox="0 0 6 9"><path d="M3 0.4 C4.3 0.4 4.6 1.6 4.5 2.8 C5.6 3.6 5.9 5.4 5.6 6.8 C5.4 8 4.6 8.6 3 8.6 C1.4 8.6 0.6 8 0.4 6.8 C0.1 5.4 0.4 3.6 1.5 2.8 C1.4 1.6 1.7 0.4 3 0.4 Z" fill="#403600"/><path d="M3 3.4 C4.2 3.6 4.8 4.8 4.7 6.2 C4.6 7.4 4 7.8 3 7.8 C2 7.8 1.4 7.4 1.3 6.2 C1.2 4.8 1.8 3.6 3 3.4 Z" fill="#f0d418"/><circle cx="3" cy="1.9" r="0.8" fill="#c8c840"/></svg>
<svg class="ic" style="left:131.6px;top:240.27px" width="9" height="9" viewBox="0 0 9 9"><circle cx="4.5" cy="4.5" r="3.9" fill="#a2b0c2"/><circle cx="4.5" cy="4.5" r="3.2" fill="#6a9ad4"/><circle cx="4" cy="3.8" r="1.6" fill="#a0c4ea"/><path d="M3.4 3.2 Q4.6 2.4 5.4 3.3 Q5.2 4.4 4.4 5.4" stroke="#f0f8ff" stroke-width="0.8" fill="none"/></svg>
<div class="r" style="top:250.46px">
<i style="left:12.0px"></i>
<i style="left:27.0px"></i>
<i style="left:70.0px"></i>
<i style="left:219.0px"></i>
<i style="left:319.7px"></i>
<i style="left:348.4px"></i>
<i style="left:454.2px"></i>
<span class="t rt" style="right:432.7px">10016</span>
<span class="t" style="left:73px">Firma ITC Nürnberg AG</span>
<span class="t" style="left:222px">Budapester Platz 32</span>
<span class="t" style="left:322.7px">90459</span>
<span class="t" style="left:351.7px">Nürnberg</span>
</div>
<svg class="ic" style="left:118.6px;top:250.96px" width="6" height="9" viewBox="0 0 6 9"><path d="M3 0.4 C4.3 0.4 4.6 1.6 4.5 2.8 C5.6 3.6 5.9 5.4 5.6 6.8 C5.4 8 4.6 8.6 3 8.6 C1.4 8.6 0.6 8 0.4 6.8 C0.1 5.4 0.4 3.6 1.5 2.8 C1.4 1.6 1.7 0.4 3 0.4 Z" fill="#403600"/><path d="M3 3.4 C4.2 3.6 4.8 4.8 4.7 6.2 C4.6 7.4 4 7.8 3 7.8 C2 7.8 1.4 7.4 1.3 6.2 C1.2 4.8 1.8 3.6 3 3.4 Z" fill="#f0d418"/><circle cx="3" cy="1.9" r="0.8" fill="#c8c840"/></svg>
<svg class="ic" style="left:131.6px;top:251.66px" width="9" height="9" viewBox="0 0 9 9"><circle cx="4.5" cy="4.5" r="3.9" fill="#a2b0c2"/><circle cx="4.5" cy="4.5" r="3.2" fill="#6a9ad4"/><circle cx="4" cy="3.8" r="1.6" fill="#a0c4ea"/><path d="M3.4 3.2 Q4.6 2.4 5.4 3.3 Q5.2 4.4 4.4 5.4" stroke="#f0f8ff" stroke-width="0.8" fill="none"/></svg>
<div class="r alt" style="top:261.85px">
<i style="left:12.0px"></i>
<i style="left:27.0px"></i>
<i style="left:70.0px"></i>
<i style="left:219.0px"></i>
<i style="left:319.7px"></i>
<i style="left:348.4px"></i>
<i style="left:454.2px"></i>
<span class="t rt" style="right:432.7px">10017</span>
<span class="t" style="left:73px">Firma DC - Entwicklung Heidner KG</span>
<span class="t" style="left:222px">Carl-Malchin-Weg 11</span>
<span class="t" style="left:322.7px">18055</span>
<span class="t" style="left:351.7px">Rostock</span>
</div>
<svg class="ic" style="left:118.6px;top:262.35px" width="6" height="9" viewBox="0 0 6 9"><path d="M3 0.4 C4.3 0.4 4.6 1.6 4.5 2.8 C5.6 3.6 5.9 5.4 5.6 6.8 C5.4 8 4.6 8.6 3 8.6 C1.4 8.6 0.6 8 0.4 6.8 C0.1 5.4 0.4 3.6 1.5 2.8 C1.4 1.6 1.7 0.4 3 0.4 Z" fill="#403600"/><path d="M3 3.4 C4.2 3.6 4.8 4.8 4.7 6.2 C4.6 7.4 4 7.8 3 7.8 C2 7.8 1.4 7.4 1.3 6.2 C1.2 4.8 1.8 3.6 3 3.4 Z" fill="#f0d418"/><circle cx="3" cy="1.9" r="0.8" fill="#c8c840"/></svg>
<svg class="ic" style="left:131.6px;top:263.05px" width="9" height="9" viewBox="0 0 9 9"><circle cx="4.5" cy="4.5" r="3.9" fill="#a2b0c2"/><circle cx="4.5" cy="4.5" r="3.2" fill="#6a9ad4"/><circle cx="4" cy="3.8" r="1.6" fill="#a0c4ea"/><path d="M3.4 3.2 Q4.6 2.4 5.4 3.3 Q5.2 4.4 4.4 5.4" stroke="#f0f8ff" stroke-width="0.8" fill="none"/></svg>
<div class="r" style="top:273.24px">
<i style="left:12.0px"></i>
<i style="left:27.0px"></i>
<i style="left:70.0px"></i>
<i style="left:219.0px"></i>
<i style="left:319.7px"></i>
<i style="left:348.4px"></i>
<i style="left:454.2px"></i>
<span class="t rt" style="right:432.7px">10018</span>
<span class="t" style="left:73px">Firma Vogel Kommunikation OHG</span>
<span class="t" style="left:222px">Am Markt 9</span>
<span class="t" style="left:322.7px">18119</span>
<span class="t" style="left:351.7px">Rostock</span>
</div>
<svg class="ic" style="left:118.6px;top:273.74px" width="6" height="9" viewBox="0 0 6 9"><path d="M3 0.4 C4.3 0.4 4.6 1.6 4.5 2.8 C5.6 3.6 5.9 5.4 5.6 6.8 C5.4 8 4.6 8.6 3 8.6 C1.4 8.6 0.6 8 0.4 6.8 C0.1 5.4 0.4 3.6 1.5 2.8 C1.4 1.6 1.7 0.4 3 0.4 Z" fill="#403600"/><path d="M3 3.4 C4.2 3.6 4.8 4.8 4.7 6.2 C4.6 7.4 4 7.8 3 7.8 C2 7.8 1.4 7.4 1.3 6.2 C1.2 4.8 1.8 3.6 3 3.4 Z" fill="#f0d418"/><circle cx="3" cy="1.9" r="0.8" fill="#c8c840"/></svg>
<svg class="ic" style="left:131.6px;top:274.44px" width="9" height="9" viewBox="0 0 9 9"><circle cx="4.5" cy="4.5" r="3.9" fill="#a2b0c2"/><circle cx="4.5" cy="4.5" r="3.2" fill="#6a9ad4"/><circle cx="4" cy="3.8" r="1.6" fill="#a0c4ea"/><path d="M3.4 3.2 Q4.6 2.4 5.4 3.3 Q5.2 4.4 4.4 5.4" stroke="#f0f8ff" stroke-width="0.8" fill="none"/></svg>
<div class="r alt" style="top:284.63px">
<i style="left:12.0px"></i>
<i style="left:27.0px"></i>
<i style="left:70.0px"></i>
<i style="left:219.0px"></i>
<i style="left:319.7px"></i>
<i style="left:348.4px"></i>
<i style="left:454.2px"></i>
<span class="t rt" style="right:432.7px">10019</span>
<span class="t" style="left:73px">Firma Computershop Fichtner</span>
<span class="t" style="left:222px">Buchenweg 6</span>
<span class="t" style="left:322.7px">18059</span>
<span class="t" style="left:351.7px">Rostock</span>
</div>
<svg class="ic" style="left:118.6px;top:285.13px" width="6" height="9" viewBox="0 0 6 9"><path d="M3 0.4 C4.3 0.4 4.6 1.6 4.5 2.8 C5.6 3.6 5.9 5.4 5.6 6.8 C5.4 8 4.6 8.6 3 8.6 C1.4 8.6 0.6 8 0.4 6.8 C0.1 5.4 0.4 3.6 1.5 2.8 C1.4 1.6 1.7 0.4 3 0.4 Z" fill="#403600"/><path d="M3 3.4 C4.2 3.6 4.8 4.8 4.7 6.2 C4.6 7.4 4 7.8 3 7.8 C2 7.8 1.4 7.4 1.3 6.2 C1.2 4.8 1.8 3.6 3 3.4 Z" fill="#f0d418"/><circle cx="3" cy="1.9" r="0.8" fill="#c8c840"/></svg>
<svg class="ic" style="left:131.6px;top:285.83px" width="9" height="9" viewBox="0 0 9 9"><circle cx="4.5" cy="4.5" r="3.9" fill="#a2b0c2"/><circle cx="4.5" cy="4.5" r="3.2" fill="#6a9ad4"/><circle cx="4" cy="3.8" r="1.6" fill="#a0c4ea"/><path d="M3.4 3.2 Q4.6 2.4 5.4 3.3 Q5.2 4.4 4.4 5.4" stroke="#f0f8ff" stroke-width="0.8" fill="none"/></svg>
<div class="r" style="top:296.02px">
<i style="left:12.0px"></i>
<i style="left:27.0px"></i>
<i style="left:70.0px"></i>
<i style="left:219.0px"></i>
<i style="left:319.7px"></i>
<i style="left:348.4px"></i>
<i style="left:454.2px"></i>
<span class="t rt" style="right:432.7px">10022</span>
<span class="t" style="left:73px">Firma</span>
<span class="t" style="left:222px"></span>
<span class="t" style="left:322.7px"></span>
<span class="t" style="left:351.7px"></span>
</div>
<svg class="ic" style="left:118.6px;top:296.52px" width="6" height="9" viewBox="0 0 6 9"><path d="M3 0.4 C4.3 0.4 4.6 1.6 4.5 2.8 C5.6 3.6 5.9 5.4 5.6 6.8 C5.4 8 4.6 8.6 3 8.6 C1.4 8.6 0.6 8 0.4 6.8 C0.1 5.4 0.4 3.6 1.5 2.8 C1.4 1.6 1.7 0.4 3 0.4 Z" fill="#403600"/><path d="M3 3.4 C4.2 3.6 4.8 4.8 4.7 6.2 C4.6 7.4 4 7.8 3 7.8 C2 7.8 1.4 7.4 1.3 6.2 C1.2 4.8 1.8 3.6 3 3.4 Z" fill="#f0d418"/><circle cx="3" cy="1.9" r="0.8" fill="#c8c840"/></svg>
<svg class="ic" style="left:131.6px;top:297.22px" width="9" height="9" viewBox="0 0 9 9"><circle cx="4.5" cy="4.5" r="3.9" fill="#a2b0c2"/><circle cx="4.5" cy="4.5" r="3.2" fill="#6a9ad4"/><circle cx="4" cy="3.8" r="1.6" fill="#a0c4ea"/><path d="M3.4 3.2 Q4.6 2.4 5.4 3.3 Q5.2 4.4 4.4 5.4" stroke="#f0f8ff" stroke-width="0.8" fill="none"/></svg>
<div class="r alt" style="top:307.41px">
<i style="left:12.0px"></i>
<i style="left:27.0px"></i>
<i style="left:70.0px"></i>
<i style="left:219.0px"></i>
<i style="left:319.7px"></i>
<i style="left:348.4px"></i>
<i style="left:454.2px"></i>
<span class="t rt" style="right:432.7px">10023</span>
<span class="t" style="left:73px">Factor</span>
<span class="t" style="left:222px"></span>
<span class="t" style="left:322.7px"></span>
<span class="t" style="left:351.7px"></span>
</div>
<svg class="ic" style="left:118.6px;top:307.91px" width="6" height="9" viewBox="0 0 6 9"><path d="M3 0.4 C4.3 0.4 4.6 1.6 4.5 2.8 C5.6 3.6 5.9 5.4 5.6 6.8 C5.4 8 4.6 8.6 3 8.6 C1.4 8.6 0.6 8 0.4 6.8 C0.1 5.4 0.4 3.6 1.5 2.8 C1.4 1.6 1.7 0.4 3 0.4 Z" fill="#403600"/><path d="M3 3.4 C4.2 3.6 4.8 4.8 4.7 6.2 C4.6 7.4 4 7.8 3 7.8 C2 7.8 1.4 7.4 1.3 6.2 C1.2 4.8 1.8 3.6 3 3.4 Z" fill="#f0d418"/><circle cx="3" cy="1.9" r="0.8" fill="#c8c840"/></svg>
<svg class="ic" style="left:131.6px;top:308.61px" width="9" height="9" viewBox="0 0 9 9"><circle cx="4.5" cy="4.5" r="3.9" fill="#a2b0c2"/><circle cx="4.5" cy="4.5" r="3.2" fill="#6a9ad4"/><circle cx="4" cy="3.8" r="1.6" fill="#a0c4ea"/><path d="M3.4 3.2 Q4.6 2.4 5.4 3.3 Q5.2 4.4 4.4 5.4" stroke="#f0f8ff" stroke-width="0.8" fill="none"/></svg>
<div class="r" style="top:318.80px">
<i style="left:12.0px"></i>
<i style="left:27.0px"></i>
<i style="left:70.0px"></i>
<i style="left:219.0px"></i>
<i style="left:319.7px"></i>
<i style="left:348.4px"></i>
<i style="left:454.2px"></i>
<span class="t rt" style="right:432.7px">10024</span>
<span class="t" style="left:73px">Firma IT-Verband</span>
<span class="t" style="left:222px">Weststraße 148</span>
<span class="t" style="left:322.7px">09111</span>
<span class="t" style="left:351.7px">Chemnitz</span>
</div>
<svg class="ic" style="left:118.6px;top:319.30px" width="6" height="9" viewBox="0 0 6 9"><path d="M3 0.4 C4.3 0.4 4.6 1.6 4.5 2.8 C5.6 3.6 5.9 5.4 5.6 6.8 C5.4 8 4.6 8.6 3 8.6 C1.4 8.6 0.6 8 0.4 6.8 C0.1 5.4 0.4 3.6 1.5 2.8 C1.4 1.6 1.7 0.4 3 0.4 Z" fill="#403600"/><path d="M3 3.4 C4.2 3.6 4.8 4.8 4.7 6.2 C4.6 7.4 4 7.8 3 7.8 C2 7.8 1.4 7.4 1.3 6.2 C1.2 4.8 1.8 3.6 3 3.4 Z" fill="#f0d418"/><circle cx="3" cy="1.9" r="0.8" fill="#c8c840"/></svg>
<svg class="ic" style="left:131.6px;top:320.00px" width="9" height="9" viewBox="0 0 9 9"><circle cx="4.5" cy="4.5" r="3.9" fill="#a2b0c2"/><circle cx="4.5" cy="4.5" r="3.2" fill="#6a9ad4"/><circle cx="4" cy="3.8" r="1.6" fill="#a0c4ea"/><path d="M3.4 3.2 Q4.6 2.4 5.4 3.3 Q5.2 4.4 4.4 5.4" stroke="#f0f8ff" stroke-width="0.8" fill="none"/></svg>
<div class="r alt" style="top:330.19px">
<i style="left:12.0px"></i>
<i style="left:27.0px"></i>
<i style="left:70.0px"></i>
<i style="left:219.0px"></i>
<i style="left:319.7px"></i>
<i style="left:348.4px"></i>
<i style="left:454.2px"></i>
<span class="t rt" style="right:432.7px">10025</span>
<span class="t" style="left:73px">Automatisch angelegt durch CRM -Wiedervorlage</span>
<span class="t" style="left:222px"></span>
<span class="t" style="left:322.7px"></span>
<span class="t" style="left:351.7px"></span>
</div>
<svg class="ic" style="left:118.6px;top:330.69px" width="6" height="9" viewBox="0 0 6 9"><path d="M3 0.4 C4.3 0.4 4.6 1.6 4.5 2.8 C5.6 3.6 5.9 5.4 5.6 6.8 C5.4 8 4.6 8.6 3 8.6 C1.4 8.6 0.6 8 0.4 6.8 C0.1 5.4 0.4 3.6 1.5 2.8 C1.4 1.6 1.7 0.4 3 0.4 Z" fill="#403600"/><path d="M3 3.4 C4.2 3.6 4.8 4.8 4.7 6.2 C4.6 7.4 4 7.8 3 7.8 C2 7.8 1.4 7.4 1.3 6.2 C1.2 4.8 1.8 3.6 3 3.4 Z" fill="#f0d418"/><circle cx="3" cy="1.9" r="0.8" fill="#c8c840"/></svg>
<div class="r" style="top:341.58px">
<i style="left:12.0px"></i>
<i style="left:27.0px"></i>
<i style="left:70.0px"></i>
<i style="left:219.0px"></i>
<i style="left:319.7px"></i>
<i style="left:348.4px"></i>
<i style="left:454.2px"></i>
<span class="t rt" style="right:432.7px">10026</span>
<span class="t" style="left:73px"></span>
<span class="t" style="left:222px"></span>
<span class="t" style="left:322.7px"></span>
<span class="t" style="left:351.7px"></span>
</div>
<svg class="ic" style="left:118.6px;top:342.08px" width="6" height="9" viewBox="0 0 6 9"><path d="M3 0.4 C4.3 0.4 4.6 1.6 4.5 2.8 C5.6 3.6 5.9 5.4 5.6 6.8 C5.4 8 4.6 8.6 3 8.6 C1.4 8.6 0.6 8 0.4 6.8 C0.1 5.4 0.4 3.6 1.5 2.8 C1.4 1.6 1.7 0.4 3 0.4 Z" fill="#403600"/><path d="M3 3.4 C4.2 3.6 4.8 4.8 4.7 6.2 C4.6 7.4 4 7.8 3 7.8 C2 7.8 1.4 7.4 1.3 6.2 C1.2 4.8 1.8 3.6 3 3.4 Z" fill="#f0d418"/><circle cx="3" cy="1.9" r="0.8" fill="#c8c840"/></svg>
<div class="r alt" style="top:352.97px">
<i style="left:12.0px"></i>
<i style="left:27.0px"></i>
<i style="left:70.0px"></i>
<i style="left:219.0px"></i>
<i style="left:319.7px"></i>
<i style="left:348.4px"></i>
<i style="left:454.2px"></i>
<span class="t rt" style="right:432.7px">20002</span>
<span class="t" style="left:73px">Herr Unger Günther</span>
<span class="t" style="left:222px">Eberhardstr. 6</span>
<span class="t" style="left:322.7px">72108</span>
<span class="t" style="left:351.7px">Rottenburg am Neckar</span>
</div>
<svg class="ic" style="left:118.6px;top:353.47px" width="6" height="9" viewBox="0 0 6 9"><path d="M3 0.4 C4.3 0.4 4.6 1.6 4.5 2.8 C5.6 3.6 5.9 5.4 5.6 6.8 C5.4 8 4.6 8.6 3 8.6 C1.4 8.6 0.6 8 0.4 6.8 C0.1 5.4 0.4 3.6 1.5 2.8 C1.4 1.6 1.7 0.4 3 0.4 Z" fill="#403600"/><path d="M3 3.4 C4.2 3.6 4.8 4.8 4.7 6.2 C4.6 7.4 4 7.8 3 7.8 C2 7.8 1.4 7.4 1.3 6.2 C1.2 4.8 1.8 3.6 3 3.4 Z" fill="#f0d418"/><circle cx="3" cy="1.9" r="0.8" fill="#c8c840"/></svg>
<svg class="ic" style="left:131.6px;top:354.17px" width="9" height="9" viewBox="0 0 9 9"><circle cx="4.5" cy="4.5" r="3.9" fill="#a2b0c2"/><circle cx="4.5" cy="4.5" r="3.2" fill="#6a9ad4"/><circle cx="4" cy="3.8" r="1.6" fill="#a0c4ea"/><path d="M3.4 3.2 Q4.6 2.4 5.4 3.3 Q5.2 4.4 4.4 5.4" stroke="#f0f8ff" stroke-width="0.8" fill="none"/></svg>
<div class="r" style="top:364.36px">
<i style="left:12.0px"></i>
<i style="left:27.0px"></i>
<i style="left:70.0px"></i>
<i style="left:219.0px"></i>
<i style="left:319.7px"></i>
<i style="left:348.4px"></i>
<i style="left:454.2px"></i>
<span class="t rt" style="right:432.7px">20003</span>
<span class="t" style="left:73px">Herr Siegel Heinz</span>
<span class="t" style="left:222px">Kornweg 1A</span>
<span class="t" style="left:322.7px">93049</span>
<span class="t" style="left:351.7px">Regensburg</span>
</div>
<svg class="ic" style="left:118.6px;top:364.86px" width="6" height="9" viewBox="0 0 6 9"><path d="M3 0.4 C4.3 0.4 4.6 1.6 4.5 2.8 C5.6 3.6 5.9 5.4 5.6 6.8 C5.4 8 4.6 8.6 3 8.6 C1.4 8.6 0.6 8 0.4 6.8 C0.1 5.4 0.4 3.6 1.5 2.8 C1.4 1.6 1.7 0.4 3 0.4 Z" fill="#403600"/><path d="M3 3.4 C4.2 3.6 4.8 4.8 4.7 6.2 C4.6 7.4 4 7.8 3 7.8 C2 7.8 1.4 7.4 1.3 6.2 C1.2 4.8 1.8 3.6 3 3.4 Z" fill="#f0d418"/><circle cx="3" cy="1.9" r="0.8" fill="#c8c840"/></svg>
<svg class="ic" style="left:131.6px;top:365.56px" width="9" height="9" viewBox="0 0 9 9"><circle cx="4.5" cy="4.5" r="3.9" fill="#a2b0c2"/><circle cx="4.5" cy="4.5" r="3.2" fill="#6a9ad4"/><circle cx="4" cy="3.8" r="1.6" fill="#a0c4ea"/><path d="M3.4 3.2 Q4.6 2.4 5.4 3.3 Q5.2 4.4 4.4 5.4" stroke="#f0f8ff" stroke-width="0.8" fill="none"/></svg>
<div class="r alt" style="top:375.75px">
<i style="left:12.0px"></i>
<i style="left:27.0px"></i>
<i style="left:70.0px"></i>
<i style="left:219.0px"></i>
<i style="left:319.7px"></i>
<i style="left:348.4px"></i>
<i style="left:454.2px"></i>
<span class="t rt" style="right:432.7px">20004</span>
<span class="t" style="left:73px">Herr Starke Helmut</span>
<span class="t" style="left:222px">Zum Vogelsang 15</span>
<span class="t" style="left:322.7px">35781</span>
<span class="t" style="left:351.7px">Weilburg</span>
</div>
<svg class="ic" style="left:118.6px;top:376.25px" width="6" height="9" viewBox="0 0 6 9"><path d="M3 0.4 C4.3 0.4 4.6 1.6 4.5 2.8 C5.6 3.6 5.9 5.4 5.6 6.8 C5.4 8 4.6 8.6 3 8.6 C1.4 8.6 0.6 8 0.4 6.8 C0.1 5.4 0.4 3.6 1.5 2.8 C1.4 1.6 1.7 0.4 3 0.4 Z" fill="#403600"/><path d="M3 3.4 C4.2 3.6 4.8 4.8 4.7 6.2 C4.6 7.4 4 7.8 3 7.8 C2 7.8 1.4 7.4 1.3 6.2 C1.2 4.8 1.8 3.6 3 3.4 Z" fill="#f0d418"/><circle cx="3" cy="1.9" r="0.8" fill="#c8c840"/></svg>
<svg class="ic" style="left:131.6px;top:376.95px" width="9" height="9" viewBox="0 0 9 9"><circle cx="4.5" cy="4.5" r="3.9" fill="#a2b0c2"/><circle cx="4.5" cy="4.5" r="3.2" fill="#6a9ad4"/><circle cx="4" cy="3.8" r="1.6" fill="#a0c4ea"/><path d="M3.4 3.2 Q4.6 2.4 5.4 3.3 Q5.2 4.4 4.4 5.4" stroke="#f0f8ff" stroke-width="0.8" fill="none"/></svg>
<div class="r" style="top:387.14px">
<i style="left:12.0px"></i>
<i style="left:27.0px"></i>
<i style="left:70.0px"></i>
<i style="left:219.0px"></i>
<i style="left:319.7px"></i>
<i style="left:348.4px"></i>
<i style="left:454.2px"></i>
<span class="t rt" style="right:432.7px">20005</span>
<span class="t" style="left:73px">Herr Thomas Jörg</span>
<span class="t" style="left:222px">Triftstr. 45</span>
<span class="t" style="left:322.7px">82496</span>
<span class="t" style="left:351.7px">Oberau, Loisach</span>
</div>
<svg class="ic" style="left:118.6px;top:387.64px" width="6" height="9" viewBox="0 0 6 9"><path d="M3 0.4 C4.3 0.4 4.6 1.6 4.5 2.8 C5.6 3.6 5.9 5.4 5.6 6.8 C5.4 8 4.6 8.6 3 8.6 C1.4 8.6 0.6 8 0.4 6.8 C0.1 5.4 0.4 3.6 1.5 2.8 C1.4 1.6 1.7 0.4 3 0.4 Z" fill="#403600"/><path d="M3 3.4 C4.2 3.6 4.8 4.8 4.7 6.2 C4.6 7.4 4 7.8 3 7.8 C2 7.8 1.4 7.4 1.3 6.2 C1.2 4.8 1.8 3.6 3 3.4 Z" fill="#f0d418"/><circle cx="3" cy="1.9" r="0.8" fill="#c8c840"/></svg>
<svg class="ic" style="left:131.6px;top:388.34px" width="9" height="9" viewBox="0 0 9 9"><circle cx="4.5" cy="4.5" r="3.9" fill="#a2b0c2"/><circle cx="4.5" cy="4.5" r="3.2" fill="#6a9ad4"/><circle cx="4" cy="3.8" r="1.6" fill="#a0c4ea"/><path d="M3.4 3.2 Q4.6 2.4 5.4 3.3 Q5.2 4.4 4.4 5.4" stroke="#f0f8ff" stroke-width="0.8" fill="none"/></svg>
<div class="r alt" style="top:398.53px">
<i style="left:12.0px"></i>
<i style="left:27.0px"></i>
<i style="left:70.0px"></i>
<i style="left:219.0px"></i>
<i style="left:319.7px"></i>
<i style="left:348.4px"></i>
<i style="left:454.2px"></i>
<span class="t rt" style="right:432.7px">20006</span>
<span class="t" style="left:73px">Herr Uhlig Jürgen</span>
<span class="t" style="left:222px">Trothaer Str. 3</span>
<span class="t" style="left:322.7px">06118</span>
<span class="t" style="left:351.7px">Halle</span>
</div>
<svg class="ic" style="left:118.6px;top:399.03px" width="6" height="9" viewBox="0 0 6 9"><path d="M3 0.4 C4.3 0.4 4.6 1.6 4.5 2.8 C5.6 3.6 5.9 5.4 5.6 6.8 C5.4 8 4.6 8.6 3 8.6 C1.4 8.6 0.6 8 0.4 6.8 C0.1 5.4 0.4 3.6 1.5 2.8 C1.4 1.6 1.7 0.4 3 0.4 Z" fill="#403600"/><path d="M3 3.4 C4.2 3.6 4.8 4.8 4.7 6.2 C4.6 7.4 4 7.8 3 7.8 C2 7.8 1.4 7.4 1.3 6.2 C1.2 4.8 1.8 3.6 3 3.4 Z" fill="#f0d418"/><circle cx="3" cy="1.9" r="0.8" fill="#c8c840"/></svg>
<svg class="ic" style="left:131.6px;top:399.73px" width="9" height="9" viewBox="0 0 9 9"><circle cx="4.5" cy="4.5" r="3.9" fill="#a2b0c2"/><circle cx="4.5" cy="4.5" r="3.2" fill="#6a9ad4"/><circle cx="4" cy="3.8" r="1.6" fill="#a0c4ea"/><path d="M3.4 3.2 Q4.6 2.4 5.4 3.3 Q5.2 4.4 4.4 5.4" stroke="#f0f8ff" stroke-width="0.8" fill="none"/></svg>
<div class="r" style="top:409.92px">
<i style="left:12.0px"></i>
<i style="left:27.0px"></i>
<i style="left:70.0px"></i>
<i style="left:219.0px"></i>
<i style="left:319.7px"></i>
<i style="left:348.4px"></i>
<i style="left:454.2px"></i>
<span class="t rt" style="right:432.7px">20007</span>
<span class="t" style="left:73px">Frau Schwarz Karin</span>
<span class="t" style="left:222px">Drachmenweg 13</span>
<span class="t" style="left:322.7px">50859</span>
<span class="t" style="left:351.7px">Köln</span>
</div>
<svg class="ic" style="left:118.6px;top:410.42px" width="6" height="9" viewBox="0 0 6 9"><path d="M3 0.4 C4.3 0.4 4.6 1.6 4.5 2.8 C5.6 3.6 5.9 5.4 5.6 6.8 C5.4 8 4.6 8.6 3 8.6 C1.4 8.6 0.6 8 0.4 6.8 C0.1 5.4 0.4 3.6 1.5 2.8 C1.4 1.6 1.7 0.4 3 0.4 Z" fill="#403600"/><path d="M3 3.4 C4.2 3.6 4.8 4.8 4.7 6.2 C4.6 7.4 4 7.8 3 7.8 C2 7.8 1.4 7.4 1.3 6.2 C1.2 4.8 1.8 3.6 3 3.4 Z" fill="#f0d418"/><circle cx="3" cy="1.9" r="0.8" fill="#c8c840"/></svg>
<svg class="ic" style="left:131.6px;top:411.12px" width="9" height="9" viewBox="0 0 9 9"><circle cx="4.5" cy="4.5" r="3.9" fill="#a2b0c2"/><circle cx="4.5" cy="4.5" r="3.2" fill="#6a9ad4"/><circle cx="4" cy="3.8" r="1.6" fill="#a0c4ea"/><path d="M3.4 3.2 Q4.6 2.4 5.4 3.3 Q5.2 4.4 4.4 5.4" stroke="#f0f8ff" stroke-width="0.8" fill="none"/></svg>
<div class="r alt" style="top:421.31px">
<i style="left:12.0px"></i>
<i style="left:27.0px"></i>
<i style="left:70.0px"></i>
<i style="left:219.0px"></i>
<i style="left:319.7px"></i>
<i style="left:348.4px"></i>
<i style="left:454.2px"></i>
<span class="t rt" style="right:432.7px">20008</span>
<span class="t" style="left:73px">Frau Seidel Kerstin</span>
<span class="t" style="left:222px">Fichtenweg 19</span>
<span class="t" style="left:322.7px">84533</span>
<span class="t" style="left:351.7px">Marktl</span>
</div>
<svg class="ic" style="left:118.6px;top:421.81px" width="6" height="9" viewBox="0 0 6 9"><path d="M3 0.4 C4.3 0.4 4.6 1.6 4.5 2.8 C5.6 3.6 5.9 5.4 5.6 6.8 C5.4 8 4.6 8.6 3 8.6 C1.4 8.6 0.6 8 0.4 6.8 C0.1 5.4 0.4 3.6 1.5 2.8 C1.4 1.6 1.7 0.4 3 0.4 Z" fill="#403600"/><path d="M3 3.4 C4.2 3.6 4.8 4.8 4.7 6.2 C4.6 7.4 4 7.8 3 7.8 C2 7.8 1.4 7.4 1.3 6.2 C1.2 4.8 1.8 3.6 3 3.4 Z" fill="#f0d418"/><circle cx="3" cy="1.9" r="0.8" fill="#c8c840"/></svg>
<svg class="ic" style="left:131.6px;top:422.51px" width="9" height="9" viewBox="0 0 9 9"><circle cx="4.5" cy="4.5" r="3.9" fill="#a2b0c2"/><circle cx="4.5" cy="4.5" r="3.2" fill="#6a9ad4"/><circle cx="4" cy="3.8" r="1.6" fill="#a0c4ea"/><path d="M3.4 3.2 Q4.6 2.4 5.4 3.3 Q5.2 4.4 4.4 5.4" stroke="#f0f8ff" stroke-width="0.8" fill="none"/></svg>
<div class="r" style="top:432.70px">
<i style="left:12.0px"></i>
<i style="left:27.0px"></i>
<i style="left:70.0px"></i>
<i style="left:219.0px"></i>
<i style="left:319.7px"></i>
<i style="left:348.4px"></i>
<i style="left:454.2px"></i>
<span class="t rt" style="right:432.7px">20009</span>
<span class="t" style="left:73px">Frau Thiele Lisa</span>
<span class="t" style="left:222px">Kyreinstr. 13</span>
<span class="t" style="left:322.7px">81371</span>
<span class="t" style="left:351.7px">München</span>
</div>
<svg class="ic" style="left:118.6px;top:433.20px" width="6" height="9" viewBox="0 0 6 9"><path d="M3 0.4 C4.3 0.4 4.6 1.6 4.5 2.8 C5.6 3.6 5.9 5.4 5.6 6.8 C5.4 8 4.6 8.6 3 8.6 C1.4 8.6 0.6 8 0.4 6.8 C0.1 5.4 0.4 3.6 1.5 2.8 C1.4 1.6 1.7 0.4 3 0.4 Z" fill="#403600"/><path d="M3 3.4 C4.2 3.6 4.8 4.8 4.7 6.2 C4.6 7.4 4 7.8 3 7.8 C2 7.8 1.4 7.4 1.3 6.2 C1.2 4.8 1.8 3.6 3 3.4 Z" fill="#f0d418"/><circle cx="3" cy="1.9" r="0.8" fill="#c8c840"/></svg>
<svg class="ic" style="left:131.6px;top:433.90px" width="9" height="9" viewBox="0 0 9 9"><circle cx="4.5" cy="4.5" r="3.9" fill="#a2b0c2"/><circle cx="4.5" cy="4.5" r="3.2" fill="#6a9ad4"/><circle cx="4" cy="3.8" r="1.6" fill="#a0c4ea"/><path d="M3.4 3.2 Q4.6 2.4 5.4 3.3 Q5.2 4.4 4.4 5.4" stroke="#f0f8ff" stroke-width="0.8" fill="none"/></svg>
  <!-- right scroll icons -->
  <svg class="ic" style="left:618.5px;top:92px" width="7" height="6" viewBox="0 0 7 6"><path d="M0.5 0.7 H6.5" stroke="#b0b0b0" stroke-width="0.8"/><path d="M0.5 5.5 L3.5 2.2 L6.5 5.5 Z" fill="#b0b0b0"/></svg>
  <svg class="ic" style="left:619px;top:102px" width="6" height="6" viewBox="0 0 6 6"><path d="M3 0.3 L5.7 3 L3 5.7 L0.3 3 Z" fill="#b8b8b8"/></svg>
  <svg class="ic" style="left:618.5px;top:111.5px" width="7" height="4" viewBox="0 0 7 4"><path d="M0.5 3.6 L3.5 0.4 L6.5 3.6 Z" fill="#b8b8b8"/></svg>
  <!-- mid icons -->
  <svg class="ic" style="left:616.5px;top:217px" width="11" height="103" viewBox="0 0 11 103">
    <g stroke="#a0a0a0" stroke-width="0.7" fill="none">
      <rect x="2.2" y="1.8" width="2.6" height="4.6"/><rect x="6" y="1.8" width="2.6" height="4.6"/>
      <path d="M2 10.5 H9" stroke="#d0d0d0"/>
      <circle cx="4.6" cy="17.2" r="2.7"/><path d="M6.4 19.2 L9.2 21.6" stroke-width="1.1"/>
      <path d="M2 23.8 H9" stroke="#d0d0d0"/>
      <path d="M1.5 28.5 H4.5 M3 28.5 V33.8 M5.5 28.5 V33.8 H7.5 M8.5 28.5 V33.8 H9.8"/>
      <path d="M2 36.5 H9" stroke="#d0d0d0"/>
      <path d="M1.5 41 H7.5 L5.2 43.8 V47 H3.8 V43.8 Z"/><path d="M7 44 H9.5 M7 46 H9.5"/>
      <path d="M2 50.3 H9" stroke="#d0d0d0"/>
      <rect x="1.5" y="53.5" width="5" height="4.5"/><rect x="3.5" y="56" width="6" height="5"/>
      <path d="M2 63.4 H9" stroke="#d0d0d0"/>
      <path d="M2 76.6 H9" stroke="#d0d0d0"/>
      <path d="M2 89.9 H9" stroke="#d0d0d0"/>
    </g>
    <g fill="#b4c6e6" stroke="#7d97c4" stroke-width="0.7">
      <rect x="1.5" y="65.8" width="8" height="8.6"/><rect x="1.5" y="79" width="8" height="8.6"/><rect x="1.5" y="92.2" width="8" height="8.6"/>
    </g>
    <g stroke="#eef3fb" stroke-width="0.9">
      <path d="M3 69 H8 M3 71.8 H8 M3 82.2 H8 M3 85 H8 M3 95.4 H8 M3 98.2 H8"/>
    </g>
  </svg>
  <!-- bottom scroll icons -->
  <svg class="ic" style="left:618.5px;top:420px" width="7" height="4" viewBox="0 0 7 4"><path d="M0.5 0.4 L3.5 3.6 L6.5 0.4 Z" fill="#b0b0b0"/></svg>
  <svg class="ic" style="left:619px;top:427.5px" width="6" height="6" viewBox="0 0 6 6"><path d="M3 0.3 L5.7 3 L3 5.7 L0.3 3 Z" fill="#b8b8b8"/></svg>
  <svg class="ic" style="left:618.5px;top:436.5px" width="7" height="6" viewBox="0 0 7 6"><path d="M0.5 5.3 H6.5" stroke="#b0b0b0" stroke-width="0.8"/><path d="M0.5 0.5 L3.5 3.8 L6.5 0.5 Z" fill="#b0b0b0"/></svg>

  <!-- Ansprechpartner groupbox -->
  <div class="gb" style="left:109.8px;top:457.8px;width:529.6px;height:77px"></div>
  <span class="gl" style="left:112.2px;top:454.2px">Ansprechpartner</span>
  <div class="hd hd2" style="left:116px;top:470.2px;width:510.7px;height:10.8px;line-height:8px">
    <i style="left:27.7px;height:8.8px"></i><i style="left:176.2px;height:8.8px"></i><i style="left:277.3px;height:8.8px"></i><i style="left:377.3px;height:8.8px"></i><i style="left:478.6px;height:8.8px"></i>
    <span style="left:1.0px">Lfd.Nr.</span><span style="left:29.8px">Name</span><span style="left:178.9px">Abteilung</span><span style="left:279.6px">Telefon</span><span style="left:379.9px">Mobiltelefon</span>
  </div>
  <svg class="ic" style="left:617px;top:470px" width="10" height="10" viewBox="0 0 10 10"><rect x="1" y="1.5" width="7" height="6.5" fill="#f4f4f4" stroke="#555" stroke-width="0.8"/><rect x="3" y="3.5" width="5.5" height="4" fill="#ddd" stroke="#555" stroke-width="0.7"/></svg>
  <div class="r c" style="top:481.00px">
<i style="left:27.7px"></i>
<i style="left:176.2px"></i>
<i style="left:277.3px"></i>
<i style="left:377.3px"></i>
<i style="left:478.6px"></i>
<span class="t rt" style="right:475.5px">1</span>
<span class="t" style="left:29.8px">Olaf Platzke</span>
<span class="t" style="left:178.9px"></span>
<span class="t" style="left:279.6px">0371 5937456-33</span>
</div>
<div class="r alt c" style="top:492.39px">
<i style="left:27.7px"></i>
<i style="left:176.2px"></i>
<i style="left:277.3px"></i>
<i style="left:377.3px"></i>
<i style="left:478.6px"></i>
<span class="t rt" style="right:475.5px">2</span>
<span class="t" style="left:29.8px">Torsten Maier</span>
<span class="t" style="left:178.9px">Technik</span>
<span class="t" style="left:279.6px">0371 5937456-21</span>
</div>
<div class="r c" style="top:503.78px">
<i style="left:27.7px"></i>
<i style="left:176.2px"></i>
<i style="left:277.3px"></i>
<i style="left:377.3px"></i>
<i style="left:478.6px"></i>
<span class="t rt" style="right:475.5px">3</span>
<span class="t" style="left:29.8px">Max König</span>
<span class="t" style="left:178.9px">Buchhaltung</span>
<span class="t" style="left:279.6px">0371 5937456-0</span>
</div>
<div class="r alt c" style="top:515.17px">
<i style="left:27.7px"></i>
<i style="left:176.2px"></i>
<i style="left:277.3px"></i>
<i style="left:377.3px"></i>
<i style="left:478.6px"></i>
</div>
  <svg class="ic" style="left:617.9px;top:484.3px" width="7" height="4" viewBox="0 0 7 4"><path d="M0.5 3.6 L3.5 0.4 L6.5 3.6 Z" fill="#b8b8b8"/></svg>
  <svg class="ic" style="left:618.3px;top:497px" width="7" height="7" viewBox="0 0 7 7"><rect x="0.5" y="0.5" width="5.5" height="6" fill="none" stroke="#b0b0b0" stroke-width="0.6"/><path d="M2.4 1.5 V5.5 M4.1 1.5 V5.5" stroke="#b0b0b0" stroke-width="0.6"/></svg>
  <svg class="ic" style="left:617.9px;top:513.2px" width="7" height="4" viewBox="0 0 7 4"><path d="M0.5 0.4 L3.5 3.6 L6.5 0.4 Z" fill="#b8b8b8"/></svg>

  <!-- status bar -->
  <div id="status">
    <span class="a" style="left:5.6px;top:3.9px;line-height:8px;color:#111">Platzke IT-Technik/10000</span>
    <div class="a" style="left:541px;top:2.4px;width:1px;height:10px;background:#9fb0d0"></div>
    <div class="a" style="left:647.5px;top:2.4px;width:1px;height:10px;background:#9fb0d0"></div>
    <svg class="ic" style="left:548.6px;top:3.4px" width="9" height="7" viewBox="0 0 9 7"><path d="M0.5 2 Q4.5 5.5 8.5 2 L8 4.5 Q4.5 7.5 1 4.5 Z" fill="#9a9aa8"/><path d="M1 2 Q4.5 4.5 8 2" stroke="#d8d8e0" stroke-width="0.6" fill="none"/></svg>
    <svg class="ic" style="left:560.4px;top:2.6px" width="11" height="10" viewBox="0 0 11 10"><path d="M1.5 6.5 Q1.2 2.2 5 1.8" stroke="#5a78c0" stroke-width="1.7" fill="none"/><path d="M3.5 8.8 Q8.6 8.8 9 4.6" stroke="#5a78c0" stroke-width="1.7" fill="none"/><path d="M3.5 3.6 L7.2 7.2" stroke="#e8c840" stroke-width="1.5"/><path d="M6.5 0.6 L9.5 3" stroke="#1a2a68" stroke-width="1.6"/><circle cx="4" cy="5.4" r="1" fill="#8098d8"/></svg>
    <svg class="ic" style="left:574px;top:3.2px" width="7" height="10" viewBox="0 0 7 10"><rect x="0.5" y="0.5" width="5.5" height="9" fill="#c8d8f0" stroke="#5a78b0" stroke-width="0.8"/><path d="M1.5 2.5 H5 M1.5 4.5 H5 M1.5 6.5 H5" stroke="#5a78b0" stroke-width="0.6"/></svg>
    <svg class="ic" style="left:584px;top:2.9px" width="10" height="10" viewBox="0 0 10 10"><circle cx="3" cy="2.5" r="1.8" fill="#d06030"/><path d="M0.8 8 Q1 4.5 3 4.5 Q5 4.5 5.2 8 Z" fill="#3050b0"/><path d="M5 3 L9.5 6 L6 9.5 Z" fill="#f0c030"/></svg>
    <svg class="ic" style="left:597px;top:3px" width="10" height="10" viewBox="0 0 10 10"><circle cx="3.2" cy="3.4" r="2.2" fill="#e8eef6" stroke="#3f6688" stroke-width="1" stroke-dasharray="1.1 0.5"/><circle cx="3.2" cy="3.4" r="0.7" fill="#3f6688"/><circle cx="6.6" cy="6.8" r="2.3" fill="#e8eef6" stroke="#3f6688" stroke-width="1" stroke-dasharray="1.1 0.5"/><circle cx="6.6" cy="6.8" r="0.7" fill="#3f6688"/></svg>
    <svg class="ic" style="left:609px;top:3.2px" width="10" height="9" viewBox="0 0 10 9"><rect x="0.4" y="0.4" width="9.2" height="8.2" fill="#f6f8fc" stroke="#4a66a0" stroke-width="0.8"/><rect x="0.4" y="0.4" width="9.2" height="3.2" fill="#2f52a0"/><path d="M1.6 5.8 H4 M6 5.8 H8.4" stroke="#202840" stroke-width="1"/><path d="M1.6 5.8 L2.6 5 M8.4 5.8 L7.4 5" stroke="#202840" stroke-width="0.7"/></svg>
    <svg class="ic" style="left:620px;top:3.2px" width="11" height="9" viewBox="0 0 11 9"><rect x="0.4" y="0.4" width="10.2" height="8.2" fill="#f6f8fc" stroke="#4a66a0" stroke-width="0.8"/><rect x="0.4" y="0.4" width="10.2" height="3" fill="#2f52a0"/><rect x="1.5" y="4.5" width="8" height="1" fill="#e89090"/><rect x="5" y="4" width="4.2" height="3" fill="#e06060"/></svg>
    <svg class="ic" style="left:632.5px;top:3.9px" width="10" height="8" viewBox="0 0 10 8"><rect x="0.5" y="0.5" width="9" height="7" rx="1" fill="#f4f6fb" stroke="#7088b0" stroke-width="0.8"/></svg>
    <svg class="ic" style="left:555.1px;top:-2.6px" width="19" height="21" viewBox="0 0 19 21"><ellipse cx="9.5" cy="10.5" rx="7.9" ry="9.6" fill="none" stroke="#c81c1c" stroke-width="1.4"/></svg>
  </div>
</body></html>
